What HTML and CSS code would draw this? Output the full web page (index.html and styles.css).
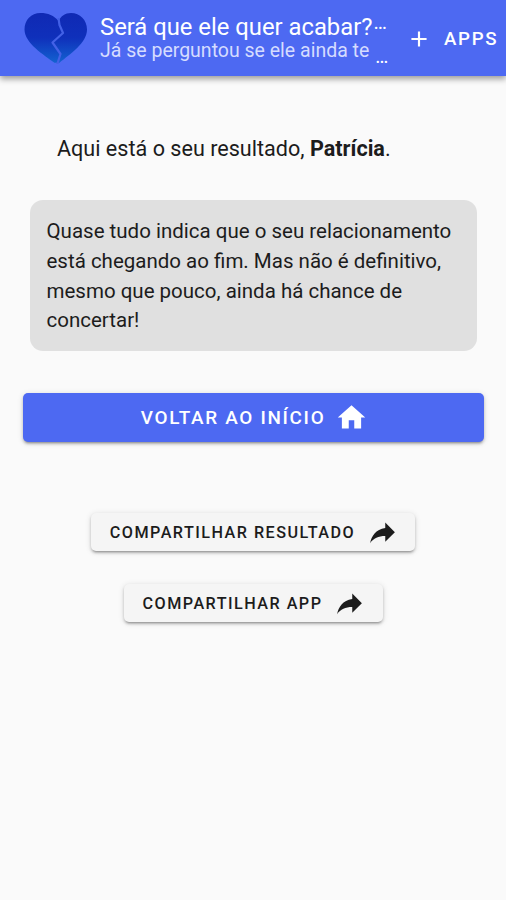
FILE: index.html
```html
<!DOCTYPE html>
<html lang="pt-BR">
<head>
    <meta charset="UTF-8">
    <meta name="viewport" content="width=device-width, initial-scale=1.0">
    <title>Será que ele quer acabar?</title>
    <link rel="stylesheet" href="styles.css">
</head>
<body>
    <header class="app-bar">
        <svg class="logo" viewBox="0 0 64 52">
            <defs>
                <linearGradient id="heart" x1="0" y1="0" x2="0" y2="1">
                    <stop offset="0" stop-color="#1029b4"/>
                    <stop offset="0.5" stop-color="#0f30bb"/>
                    <stop offset="1" stop-color="#1362d0"/>
                </linearGradient>
            </defs>
            <path fill="url(#heart)" d="M30.5 50.800C20 43 0.500 31 0.500 17.500C0.500 8 7 1 16.500 1C24 1 30 3.500 34.500 9C37 4 41 1 47 1C56 1 63 8 63 17.500C63 31 46 42 35.500 50.800Z"/>
            <path class="crack" d="M34.500 6L35.500 13L39 21L28.500 30.500L36.500 42L33 53"/>
        </svg>
        <div class="titles">
            <div class="title">Será que ele quer acabar?<span class="title-dots">…</span></div>
            <div class="subtitle">Já se perguntou se ele ainda te <span class="subtitle-dots">…</span></div>
        </div>
        <button class="apps-button">
            <svg viewBox="0 0 24 24"><path d="M19,13H13V19H11V13H5V11H11V5H13V11H19V13Z"/></svg>
            <span>APPS</span>
        </button>
    </header>

    <main class="content">
        <p class="greeting">Aqui está o seu resultado, <b>Patrícia</b>.</p>
        <div class="result">
            Quase tudo indica que o seu relacionamento<br>
            está chegando ao fim. Mas não é definitivo,<br>
            mesmo que pouco, ainda há chance de<br>
            concertar!
        </div>
        <button class="button home-button">
            <span>VOLTAR AO INÍCIO</span>
            <svg viewBox="0 0 24 24"><path d="M10,20V14H14V20H19V12H22L12,3L2,12H5V20H10Z"/></svg>
        </button>
        <button class="button share-button">
            <span>COMPARTILHAR RESULTADO</span>
            <svg viewBox="0 0 24 24"><path d="M21,11L14,4V8C7,9 4,14 3,19C5.5,15.5 9,13.9 14,13.9V18L21,11Z"/></svg>
        </button>
        <button class="button share-button share-app">
            <span>COMPARTILHAR APP</span>
            <svg viewBox="0 0 24 24"><path d="M21,11L14,4V8C7,9 4,14 3,19C5.5,15.5 9,13.9 14,13.9V18L21,11Z"/></svg>
        </button>
    </main>
</body>
</html>
```
FILE: styles.css
```css
* {
    box-sizing: border-box;
}
body {
    margin: 0;
    min-height: 100vh;
    background-color: #fafafa;
    color: #1c1c1c;
    font-family: Roboto, sans-serif;
    overflow: hidden;
}
button {
    border: none;
    padding: 0;
    font-family: inherit;
    cursor: pointer;
}
svg {
    display: block;
    flex: none;
    fill: currentColor;
}
.app-bar {
    display: flex;
    height: 76px;
    background-color: #4d69f2;
    color: #ffffff;
    box-shadow: 0 3px 6px rgba(0, 0, 0, 0.38);
}
.logo {
    width: 64px;
    height: 52px;
    margin: 12px 0 0 24px;
}
.crack {
    fill: none;
    stroke: #4361e6;
    stroke-width: 2.2;
    stroke-linejoin: round;
}
.titles {
    width: 290px;
    margin: 14px 0 0 12px;
    white-space: nowrap;
}
.title {
    height: 26px;
    font-size: 23.8px;
    line-height: 27px;
}
.title-dots {
    position: relative;
    top: -6px;
    left: 1px;
    font-size: 20px;
}
.subtitle {
    height: 22px;
    font-size: 19.5px;
    line-height: 21px;
    color: #d5dcff;
}
.subtitle-dots {
    position: relative;
    top: 6px;
    left: 1px;
    color: #ffffff;
}
.apps-button {
    display: flex;
    align-items: center;
    height: 77px;
    margin-left: 17px;
    background: none;
    color: #ffffff;
    font-size: 18.7px;
    font-weight: 500;
    letter-spacing: 1.67px;
}
.apps-button svg {
    width: 26px;
    height: 26px;
    margin: 0 12px 0 -1px;
}
.content {
    display: flex;
    flex-direction: column;
    align-items: center;
}
.greeting {
    align-self: flex-start;
    margin: 58px 0 0 57px;
    font-size: 21.6px;
    line-height: 30px;
    white-space: nowrap;
}
.result {
    width: 447px;
    height: 151px;
    margin-top: 36px;
    padding: 17px 0 0 17px;
    border-radius: 13px;
    background-color: #e0e0e0;
    font-size: 20.5px;
    line-height: 29.8px;
    white-space: nowrap;
}
.button {
    display: flex;
    align-items: center;
    justify-content: center;
    border-radius: 5px;
    font-weight: 500;
    white-space: nowrap;
    box-shadow: 0 3px 2px -2px rgba(0, 0, 0, 0.2), 0 2px 3px rgba(0, 0, 0, 0.2), 0 1px 6px rgba(0, 0, 0, 0.12);
}
.button svg {
    width: 33px;
    height: 33px;
}
.home-button {
    width: 461px;
    height: 49px;
    margin-top: 42px;
    background-color: #4d69f2;
    color: #ffffff;
    font-size: 18.9px;
    letter-spacing: 1.69px;
}
.home-button svg {
    margin: 0 -3px 0 10px;
}
.share-button {
    width: 324px;
    height: 38px;
    margin-top: 71px;
    background-color: #f5f5f5;
    color: #1c1c1c;
    font-size: 16.2px;
    letter-spacing: 1.46px;
}
.share-button svg {
    margin: 2px -3px 0 11px;
}
.share-app {
    width: 259px;
    margin-top: 33px;
}
```
